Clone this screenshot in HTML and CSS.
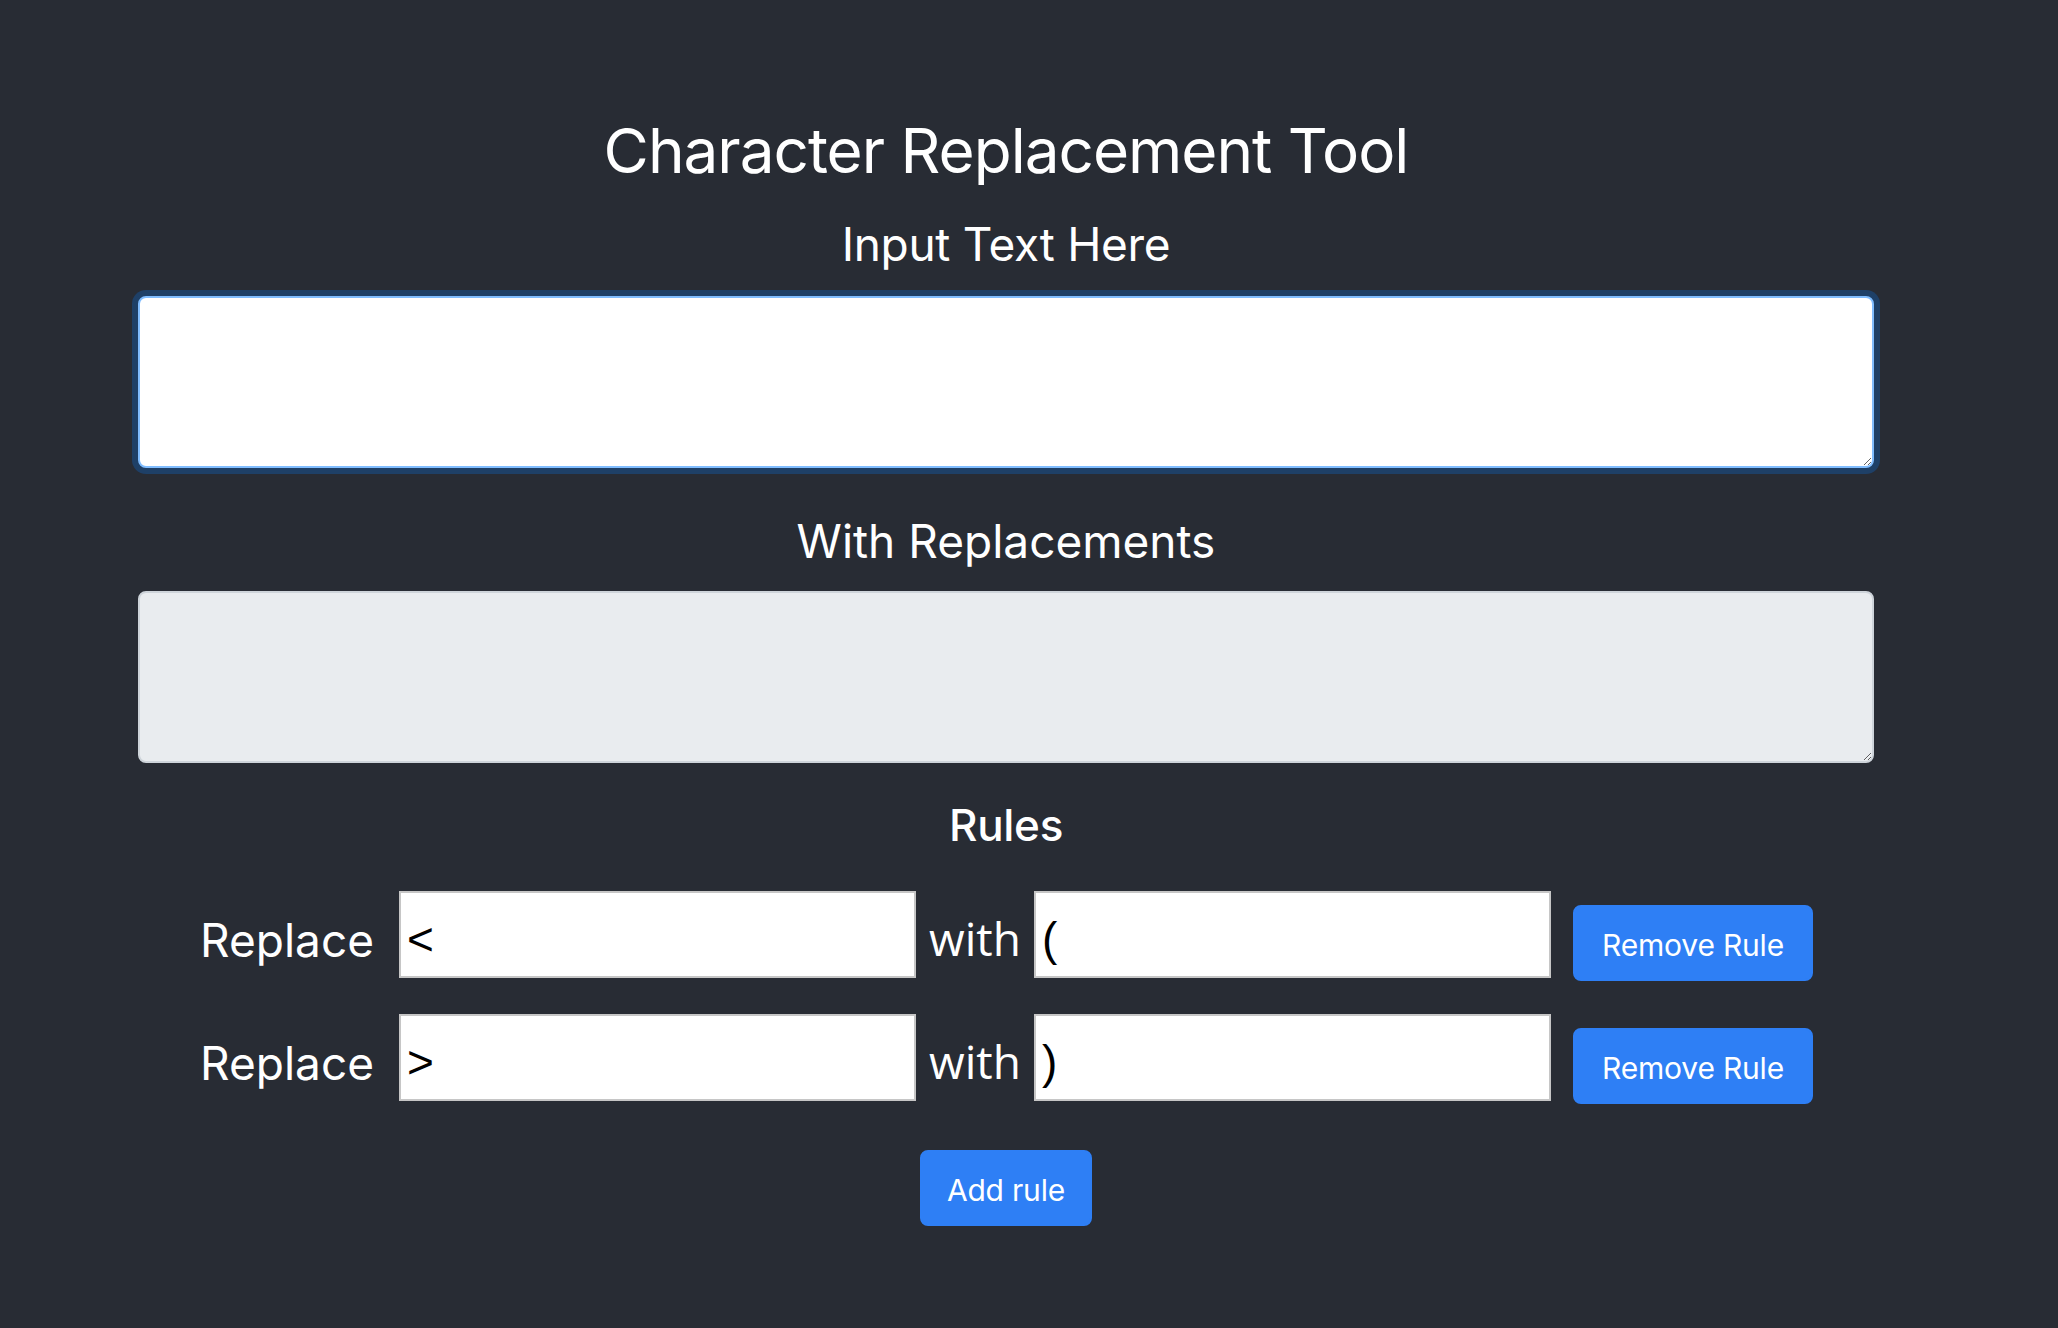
FILE: index.html
```html
<!DOCTYPE html>
<html lang="en">
<head>
<meta charset="utf-8">
<title>Character Replacement Tool</title>
<link rel="stylesheet" href="styles.css">
</head>
<body>
<div class="app">
  <h2 class="title">Character Replacement Tool</h2>
  <div class="label">Input Text Here</div>
  <textarea class="area area-input"></textarea>
  <div class="label label-out">With Replacements</div>
  <textarea class="area area-output" readonly></textarea>
  <h4 class="rules-title">Rules</h4>
  <div class="rules">
    <div class="rule">
      <span class="rule-label">Replace</span>
      <input class="rule-input" type="text" value="&lt;">
      <span class="rule-with">with</span>
      <input class="rule-input" type="text" value="(">
      <button class="btn btn-remove">Remove Rule</button>
    </div>
    <div class="rule">
      <span class="rule-label">Replace</span>
      <input class="rule-input" type="text" value="&gt;">
      <span class="rule-with">with</span>
      <input class="rule-input" type="text" value=")">
      <button class="btn btn-remove">Remove Rule</button>
    </div>
  </div>
  <div class="add-row">
    <button class="btn btn-add">Add rule</button>
  </div>
</div>
</body>
</html>
```
FILE: styles.css
```css
html, body {
  margin: 0;
  padding: 0;
  background: #282c34;
}
body {
  min-height: 100vh;
  font-family: Inter, "Noto Sans", "Liberation Sans", sans-serif;
  color: #ffffff;
}
.app {
  width: 2012px;
  padding-top: 114px;
  text-align: center;
}
.title {
  margin: 0 0 28px;
  font-size: 62px;
  line-height: 74px;
  font-weight: 400;
  letter-spacing: -1px;
}
.label {
  font-size: 46px;
  line-height: 56px;
  font-weight: 400;
  letter-spacing: -0.3px;
  margin: 0 0 24px;
}
.label-out {
  margin: 45px 0 22px;
  letter-spacing: 0;
}
.area {
  display: block;
  box-sizing: border-box;
  width: 1736px;
  height: 172px;
  margin: 0 138px;
  padding: 12px 24px;
  border-radius: 8px;
  font-family: Inter, "Liberation Sans", sans-serif;
  font-size: 32px;
  outline: none;
  resize: vertical;
}
.area-input {
  background: #ffffff;
  border: 2px solid #80bdff;
  box-shadow: 0 0 0 6px rgba(0, 123, 255, 0.25);
}
.area-output {
  background: #e9ecef;
  border: 2px solid #ced4da;
}
.rules-title {
  margin: 36px 0 40px;
  font-size: 44px;
  line-height: 52px;
  font-weight: 500;
  letter-spacing: -0.3px;
}
.rules {
  display: flex;
  flex-direction: column;
  gap: 36px;
}
.rule {
  display: flex;
  justify-content: center;
  align-items: flex-start;
  height: 87px;
}
.rule-label {
  box-sizing: border-box;
  width: 200px;
  padding: 9px 0 0 1px;
  text-align: left;
  font-size: 46px;
  line-height: 81px;
  letter-spacing: 0;
  white-space: nowrap;
}
.rule-with {
  box-sizing: border-box;
  width: 118px;
  height: 87px;
  padding-top: 7px;
  text-align: center;
  font-family: "Open Sans", "Noto Sans", sans-serif;
  font-size: 46px;
  line-height: 81px;
  background: #282c34;
}
.rule-input {
  box-sizing: border-box;
  width: 517px;
  height: 87px;
  margin: 0;
  padding: 8px 6px 0;
  border: 2px solid #c6c6c6;
  border-radius: 0;
  background: #ffffff;
  color: #000000;
  font-family: "Liberation Sans", Arial, sans-serif;
  font-size: 46px;
  outline: none;
}
.btn {
  box-sizing: border-box;
  height: 76px;
  padding: 4px 0 0;
  border: 2px solid #2e7ff5;
  border-radius: 8px;
  background: #2e7ff5;
  color: #ffffff;
  font-family: Inter, "Liberation Sans", sans-serif;
  font-size: 30px;
  line-height: 68px;
  font-weight: 400;
  letter-spacing: -0.2px;
  white-space: nowrap;
  text-align: center;
  cursor: pointer;
}
.btn-remove {
  width: 240px;
  margin: 14px 0 0 22px;
}
.add-row {
  display: flex;
  justify-content: center;
  margin-top: 49px;
}
.btn-add {
  width: 172px;
}
```
